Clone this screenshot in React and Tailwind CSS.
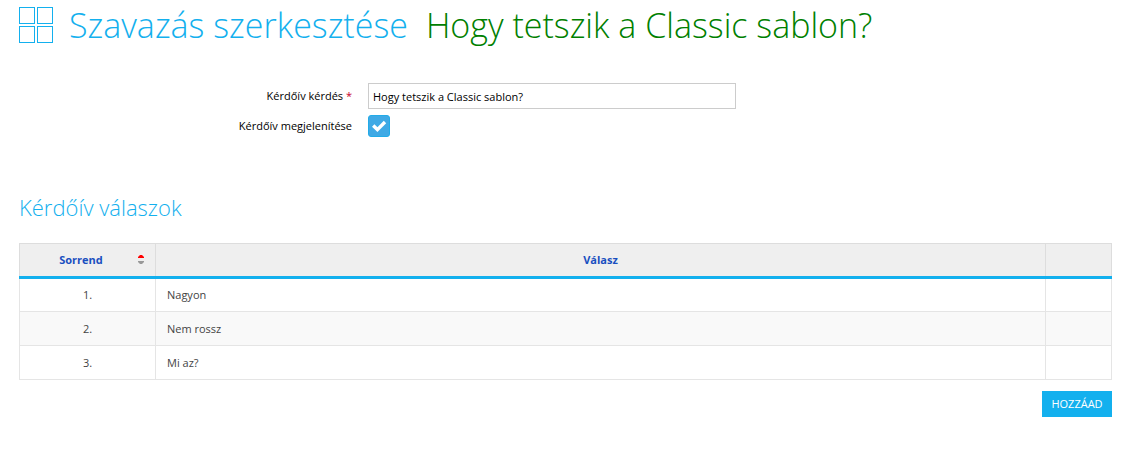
// App.jsx
const answers = [
  { id: 1, text: "Nagyon" },
  { id: 2, text: "Nem rossz" },
  { id: 3, text: "Mi az?" },
];

function GridIcon() {
  return (
    <svg
      className="h-[36px] w-[34px] shrink-0"
      viewBox="0 0 34 36"
      fill="none"
      stroke="#13b0ee"
      aria-hidden="true"
    >
      <rect x="0.5" y="0.5" width="15" height="16" />
      <rect x="18.5" y="0.5" width="15" height="16" />
      <rect x="0.5" y="19.5" width="15" height="16" />
      <rect x="18.5" y="19.5" width="15" height="16" />
    </svg>
  );
}

function CheckIcon() {
  return (
    <svg
      className="pointer-events-none absolute inset-0 hidden size-[22px] peer-checked:block"
      viewBox="0 0 22 22"
      fill="none"
      stroke="#fff"
      strokeWidth="3.4"
      aria-hidden="true"
    >
      <path d="M5.2 10.6L9.4 14.6L17 7" />
    </svg>
  );
}

function SortIcon() {
  return (
    <svg className="h-[10px] w-[6px]" viewBox="0 0 6 10" aria-hidden="true">
      <path d="M2 0H4L6 2V3H0V2Z" fill="#f00" />
      <path d="M0 6H6V7L4 9H2L0 7Z" fill="#999" />
    </svg>
  );
}

export default function App() {
  return (
    <main className="px-[19px] font-['Open_Sans',sans-serif] text-[11px] leading-4 text-black">
      <h1 className="flex items-center pt-[3px] text-[34px] leading-[44px] font-light">
        <GridIcon />
        <span className="ml-4 text-[#13b0ee]">Szavazás szerkesztése</span>
        <span className="ml-[18px] text-[#008000]">Hogy tetszik a Classic sablon?</span>
      </h1>

      <form className="mt-[36px] flex flex-col gap-[6px]">
        <div className="flex items-center">
          <label htmlFor="question" className="w-[333px] text-right">
            Kérdőív kérdés <span className="text-[#c8002d]">*</span>
          </label>
          <input
            id="question"
            type="text"
            defaultValue="Hogy tetszik a Classic sablon?"
            className="ml-4 h-[26px] w-[368px] border border-[#ccc] px-1"
          />
        </div>
        <div className="flex items-center">
          <label htmlFor="visible" className="w-[333px] text-right">
            Kérdőív megjelenítése
          </label>
          <span className="relative ml-4 flex">
            <input
              id="visible"
              type="checkbox"
              defaultChecked
              className="peer size-[22px] appearance-none rounded-[3px] border border-[#22abe8] checked:bg-[#3fa9e5]"
            />
            <CheckIcon />
          </span>
        </div>
      </form>

      <h2 className="mt-[56px] text-[22px] leading-7 font-light text-[#13b0ee]">
        Kérdőív válaszok
      </h2>

      <table className="mt-[22px] w-full table-fixed border-collapse">
        <thead>
          <tr className="h-[34px] border border-[#ddd] border-b-[3px] border-b-[#13b0ee] bg-[#efefef] text-[#1a4fc0]">
            <th className="w-[136px] border-r border-[#ddd] pr-[11px]">
              <div className="flex items-center">
                <span className="flex-1 pl-1">Sorrend</span>
                <SortIcon />
              </div>
            </th>
            <th className="border-r border-[#ddd]">Válasz</th>
            <th className="w-[66px]"></th>
          </tr>
        </thead>
        <tbody>
          {answers.map((answer) => (
            <tr
              key={answer.id}
              className="h-[34px] border border-[#e5e5e5] text-[#444] even:bg-[#f9f9f9]"
            >
              <td className="border-r border-[#e5e5e5] text-center">{answer.id}.</td>
              <td className="border-r border-[#e5e5e5] px-[11px]">{answer.text}</td>
              <td></td>
            </tr>
          ))}
        </tbody>
      </table>

      <div className="mt-[11px] flex justify-end">
        <button type="button" className="h-[26px] min-w-[70px] bg-[#13b0ee] px-2 text-white">
          HOZZÁAD
        </button>
      </div>
    </main>
  );
}
